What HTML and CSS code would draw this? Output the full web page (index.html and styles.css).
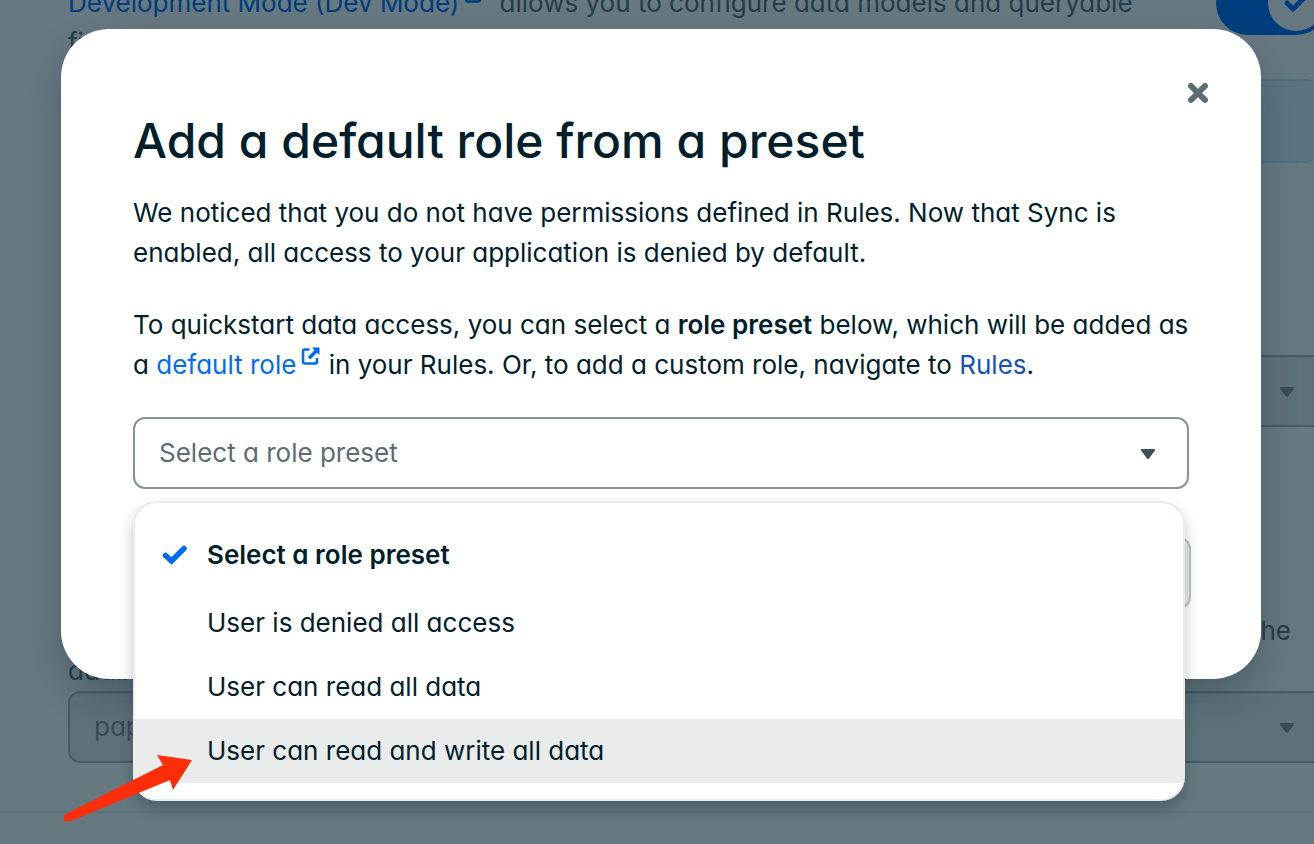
FILE: index.html
```html
<!DOCTYPE html>
<html lang="en">
<head>
<meta charset="utf-8">
<title>Add a default role from a preset</title>
<link rel="stylesheet" href="styles.css">
</head>
<body>
<main class="page" inert>
  <section class="dev-mode">
    <p class="dev-text"><a href="#">Development Mode (Dev Mode)<svg class="ext" viewBox="0 0 20 20" aria-hidden="true"><path d="M8.500 3.500H4Q2 3.500 2 5.500V15.500Q2 17.500 4 17.500H14Q16 17.500 16 15.500V12" fill="none" stroke="currentColor" stroke-width="2.600"/><path d="M11 1.500H18.500V9L16 6.700L9.300 13.400L6.800 10.900L13.500 4.200Z" fill="currentColor"/></svg></a> allows you to configure data models and queryable<br>fields</p>
    <button class="toggle" type="button" role="switch" aria-checked="true" aria-label="Development Mode"><span class="knob"><svg viewBox="0 0 24 24" aria-hidden="true"><path d="M3 12L9 18L21 6" fill="none" stroke="currentColor" stroke-width="5" stroke-linecap="round" stroke-linejoin="round"/></svg></span></button>
  </section>
  <div class="banner"></div>
  <div class="field field-first">
    <select class="select muted" aria-label="Field" disabled><option></option></select>
    <svg class="caret" viewBox="0 0 16 12" aria-hidden="true"><path d="M1.500 1H14.500Q15.500 1.500 15 2.500L9 10.500Q8 11.500 7 10.500L1 2.500Q.5 1.500 1.500 1Z"/></svg>
  </div>
  <p class="help"><span>the</span>adding</p>
  <div class="field">
    <select class="select muted" aria-label="Value" disabled><option>pap</option></select>
    <svg class="caret" viewBox="0 0 16 12" aria-hidden="true"><path d="M1.500 1H14.500Q15.500 1.500 15 2.500L9 10.500Q8 11.500 7 10.500L1 2.500Q.5 1.500 1.500 1Z"/></svg>
  </div>
</main>
<div class="backdrop">
  <div class="modal" role="dialog" aria-modal="true" aria-labelledby="title">
    <button class="close" type="button" aria-label="Close"><svg viewBox="0 0 22 22" aria-hidden="true"><path d="M4 4L18 18M18 4L4 18" fill="none" stroke="currentColor" stroke-width="6" stroke-linecap="round"/></svg></button>
    <h1 id="title">Add a default role from a preset</h1>
    <p class="copy">We noticed that you do not have permissions defined in Rules. Now that Sync is<br>enabled, all access to your application is denied by default.</p>
    <p class="copy">To quickstart data access, you can select a <b>role preset</b> below, which will be added as<br>a <a class="bright" href="#">default role<svg class="ext" viewBox="0 0 20 20" aria-hidden="true"><path d="M8.500 3.500H4Q2 3.500 2 5.500V15.500Q2 17.500 4 17.500H14Q16 17.500 16 15.500V12" fill="none" stroke="currentColor" stroke-width="2.600"/><path d="M11 1.500H18.500V9L16 6.700L9.300 13.400L6.800 10.900L13.500 4.200Z" fill="currentColor"/></svg></a> in your Rules. Or, to add a custom role, navigate to <a href="#">Rules</a>.</p>
    <div class="field">
      <select class="select" aria-label="Role preset"><option>Select a role preset</option></select>
      <svg class="caret" viewBox="0 0 16 12" aria-hidden="true"><path d="M1.500 1H14.500Q15.500 1.500 15 2.500L9 10.500Q8 11.500 7 10.500L1 2.500Q.5 1.500 1.500 1Z"/></svg>
      <ul class="menu" role="listbox" aria-label="Role preset">
        <li class="item chosen" role="option" aria-selected="true"><svg class="tick" viewBox="0 0 26 22" aria-hidden="true"><path d="M3.500 11.500L9.500 17L22 4.500" fill="none" stroke="currentColor" stroke-width="5.500" stroke-linecap="round"/></svg>Select a role preset</li>
        <li class="item" role="option">User is denied all access</li>
        <li class="item" role="option">User can read all data</li>
        <li class="item active" role="option">User can read and write all data</li>
      </ul>
    </div>
    <div class="footer"><button class="action" type="button" aria-label="Save" disabled></button></div>
  </div>
</div>
<svg class="arrow" viewBox="0 0 130 68" aria-hidden="true"><path d="M1 61L100 11L94 1L129 6L110 36L107 26L8 67Q1 68 1 66Z" fill="#ff2d08"/></svg>
</body>
</html>
```
FILE: styles.css
```css
* { box-sizing: border-box; }
body {
  margin: 0;
  height: 100vh;
  overflow: hidden;
  background: #fff;
  color: #001e2b;
  font: 26px/40px Inter, "Open Sans", sans-serif;
  font-feature-settings: "cv11" 1;
}
p, h1, ul { margin: 0; padding: 0; }
a { color: #016bf8; text-decoration: none; }
button, select { font: inherit; font-feature-settings: inherit; }
.ext { width: 20px; height: 20px; margin-left: 5px; vertical-align: 8px; margin-top: -8px; }

.page {
  height: 100vh;
  margin: 0 -14px 0 0;
  overflow: hidden;
}
.page > * { margin-left: 68px; }
.page::after {
  content: "";
  display: block;
  margin-top: 48px;
  border-top: 2px solid #e8edeb;
}
.dev-mode {
  display: flex;
  justify-content: space-between;
  margin-top: -29px;
}
.dev-text { padding-top: 12px; color: #5c6c75; }
.dev-text a { margin-right: 8px; }
.toggle {
  display: flex;
  align-items: center;
  justify-content: flex-end;
  width: 112px;
  height: 64px;
  padding: 4px;
  border: 0;
  border-radius: 32px;
  background: #016bf8;
}
.knob {
  display: grid;
  place-items: center;
  width: 56px;
  height: 56px;
  border-radius: 50%;
  background: #fff;
  color: #016bf8;
}
.knob svg { width: 24px; height: 24px; }
.banner {
  height: 84px;
  margin-top: 16px;
  border: 2px solid #c3e7fe;
  border-radius: 24px;
  background: #e1f7ff;
}
.field { position: relative; }
.field-first { margin-top: 192px; }
.select {
  display: block;
  width: 100%;
  height: 72px;
  padding: 0 24px;
  appearance: none;
  border: 2px solid #889397;
  border-radius: 12px;
  background: #fff;
  color: #5c6c75;
  opacity: 1;
}
.muted { background: #e8edeb; border-color: #b0b9ba; color: #889397; }
.caret {
  position: absolute;
  top: 31px;
  right: 33px;
  width: 16px;
  height: 12px;
  fill: #3d4f58;
}
.muted + .caret { fill: #889397; }
.help { margin-top: 184px; color: #5c6c75; }
.help span { display: block; padding-right: 37px; text-align: right; }

.backdrop {
  position: absolute;
  inset: 0;
  padding: 29px 53px 0 61px;
  background: rgba(0, 30, 43, 0.6);
}
.modal {
  position: relative;
  padding: 80px 72px 70px;
  border-radius: 48px;
  background: #fff;
  box-shadow: 0 16px 40px -8px rgba(0, 30, 43, 0.4);
}
.close {
  position: absolute;
  top: 48px;
  right: 47px;
  display: grid;
  place-items: center;
  width: 32px;
  height: 32px;
  padding: 0;
  border: 0;
  background: none;
  color: #5c6c75;
}
.close svg { width: 22px; height: 22px; }
h1 { margin-bottom: 20px; font-size: 48px; line-height: 64px; font-weight: 500; }
.copy { margin-bottom: 32px; }
.copy a { color: #1254b7; }
.copy .bright { color: #016bf8; }
.menu {
  position: absolute;
  top: 84px;
  left: 0;
  right: 4px;
  z-index: 1;
  padding: 16px 0;
  border: 2px solid #e8edeb;
  border-radius: 24px;
  background: #fff;
  box-shadow: 0 8px 14px rgba(0, 30, 43, 0.25);
  list-style: none;
}
.item { display: flex; align-items: center; height: 64px; padding-left: 72px; }
.chosen { height: 72px; padding-left: 27px; font-weight: 600; }
.copy b { font-weight: 600; }
.active { background: #eaebeb; }
.tick { width: 26px; height: 22px; margin-right: 19px; color: #016bf8; }
.footer { display: flex; justify-content: flex-end; margin: 48px -2px 0 0; }
.action {
  width: 140px;
  height: 72px;
  border: 2px solid #b8c4c2;
  border-radius: 12px;
  background: #e8edeb;
}
.arrow { position: absolute; top: 754px; left: 63px; z-index: 2; width: 130px; height: 68px; }
```
